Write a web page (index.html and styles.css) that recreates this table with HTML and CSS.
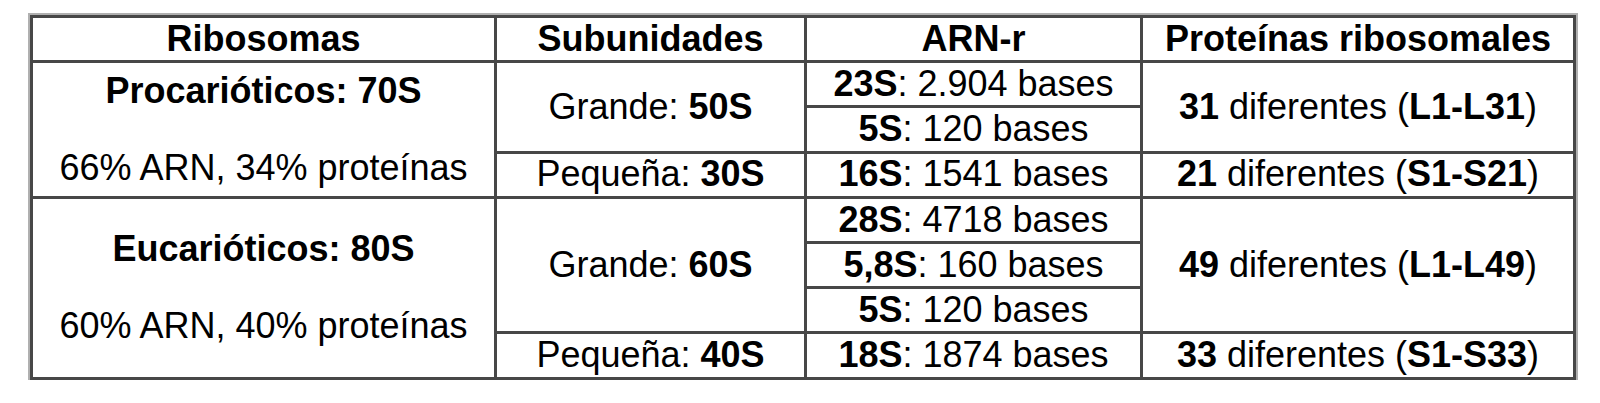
FILE: index.html
```html
<!DOCTYPE html>
<html lang="es">
<head>
<meta charset="utf-8">
<title>Ribosomas</title>
<link rel="stylesheet" href="styles.css">
</head>
<body>
<table class="ribo">
  <colgroup>
    <col class="c1"><col class="c2"><col class="c3"><col class="c4">
  </colgroup>
  <thead>
    <tr>
      <th>Ribosomas</th>
      <th>Subunidades</th>
      <th>ARN-r</th>
      <th>Proteínas ribosomales</th>
    </tr>
  </thead>
  <tbody>
    <tr>
      <td rowspan="3" class="kind-cell">
        <div class="kind"><b>Procarióticos: 70S</b></div>
        <div class="comp">66% ARN, 34% proteínas</div>
      </td>
      <td rowspan="2">Grande: <b>50S</b></td>
      <td><b>23S</b>: 2.904 bases</td>
      <td rowspan="2"><b>31</b> diferentes (<b>L1-L31</b>)</td>
    </tr>
    <tr>
      <td><b>5S</b>: 120 bases</td>
    </tr>
    <tr>
      <td>Pequeña: <b>30S</b></td>
      <td><b>16S</b>: 1541 bases</td>
      <td><b>21</b> diferentes (<b>S1-S21</b>)</td>
    </tr>
    <tr>
      <td rowspan="4" class="kind-cell">
        <div class="kind"><b>Eucarióticos: 80S</b></div>
        <div class="comp">60% ARN, 40% proteínas</div>
      </td>
      <td rowspan="3">Grande: <b>60S</b></td>
      <td><b>28S</b>: 4718 bases</td>
      <td rowspan="3"><b>49</b> diferentes (<b>L1-L49</b>)</td>
    </tr>
    <tr>
      <td><b>5,8S</b>: 160 bases</td>
    </tr>
    <tr>
      <td><b>5S</b>: 120 bases</td>
    </tr>
    <tr>
      <td>Pequeña: <b>40S</b></td>
      <td><b>18S</b>: 1874 bases</td>
      <td><b>33</b> diferentes (<b>S1-S33</b>)</td>
    </tr>
  </tbody>
</table>
</body>
</html>
```

FILE: styles.css
```css
html, body {
  margin: 0;
  padding: 0;
  background: #ffffff;
}

body {
  padding: 15px 0 0 30px;
  font-family: "Liberation Sans", Arial, sans-serif;
  font-size: 36px;
  color: #000;
}

.ribo {
  border-collapse: collapse;
  table-layout: fixed;
  width: 1543px;
  border: 3px solid #444;
  box-shadow: 0 0 0 2px #b0b0b0;
}

.c1 { width: 464px; }
.c2 { width: 310px; }
.c3 { width: 336px; }
.c4 { width: 433px; }

.ribo th,
.ribo td {
  border: 3px solid #474747;
  padding: 0;
  height: 42.2px;
  line-height: 38.5px;
  text-align: center;
  vertical-align: middle;
  white-space: nowrap;
}

.ribo th {
  font-weight: bold;
}

.ribo b {
  font-weight: bold;
}

.kind-cell .kind {
  margin-bottom: 38.5px;
}
```
